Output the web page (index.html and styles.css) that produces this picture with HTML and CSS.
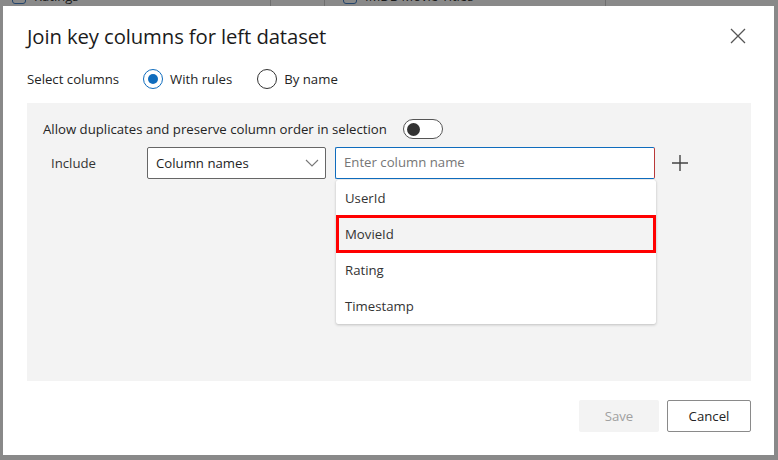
FILE: index.html
```html
<!DOCTYPE html>
<html>
<head>
<meta charset="utf-8">
<link rel="stylesheet" href="styles.css">
</head>
<body>
<div class="backdrop">
  <div class="behind">
    <div class="tab t1"><span class="ticon"></span><span class="ttext">Ratings</span></div>
    <div class="tab t2"></div>
    <div class="tab t3"><span class="ticon"></span><span class="ttext">IMDB Movie Titles</span></div>
    <div class="tab t4"></div>
  </div>
  <div class="dialog">
    <div class="header">
      <h1 class="title">Join key columns for left dataset</h1>
      <svg class="close" width="16" height="16" viewBox="0 0 16 16"><path d="M1 1 L15 15 M15 1 L1 15" stroke="#555" stroke-width="1.3" fill="none"/></svg>
    </div>
    <div class="select-row">
      <span class="label">Select columns</span>
      <span class="radio checked"><span class="dot"></span></span><span class="rlabel">With rules</span>
      <span class="radio"></span><span class="rlabel">By name</span>
    </div>
    <div class="panel">
      <div class="allow-row">
        <span>Allow duplicates and preserve column order in selection</span>
        <span class="toggle"><span class="knob"></span></span>
      </div>
      <div class="include-row">
        <span class="inc-label">Include</span>
        <div class="dropdown">
          <span>Column names</span>
          <svg width="14" height="8" viewBox="0 0 14 8"><path d="M1 1 L7 7 L13 1" stroke="#777" stroke-width="1.1" fill="none"/></svg>
        </div>
        <div class="combo">
          <div class="input">Enter column name</div>
          <div class="menu">
            <div class="item">UserId</div>
            <div class="item sel">MovieId</div>
            <div class="item">Rating</div>
            <div class="item">Timestamp</div>
          </div>
        </div>
        <svg class="plus" width="18" height="18" viewBox="0 0 18 18"><path d="M9 1 V17 M1 9 H17" stroke="#444" stroke-width="1.4" fill="none"/></svg>
      </div>
    </div>
    <div class="footer">
      <button class="btn save">Save</button>
      <button class="btn cancel">Cancel</button>
    </div>
  </div>
</div>
</body>
</html>
```

FILE: styles.css
```css
* { box-sizing: border-box; }
html, body { margin: 0; padding: 0; }
body {
  width: 778px; height: 460px; overflow: hidden;
  background: #898989;
  font-family: "Open Sans", "Noto Sans", sans-serif;
  color: #242424;
}
.backdrop { position: relative; width: 778px; height: 460px; }
.behind {
  position: absolute; left: 0; top: -12px; width: 778px; height: 18px;
  display: flex;
}
.tab { height: 18px; display: flex; align-items: center; gap: 8px; padding-left: 12px; color: #1a1a1a; font-size: 13px; }
.t1 { width: 271px; border-right: 1px solid #6f6f6f; }
.t2 { width: 54px; border-right: 1px solid #6f6f6f; }
.t3 { width: 281px; border-right: 1px solid #6f6f6f; padding-left: 18px; }
.t4 { flex: 1; }
.ticon { width: 14px; height: 14px; border: 1.5px solid #23446b; border-radius: 3px; }
.ttext { position: relative; top: -1px; }

.dialog {
  position: absolute; left: 3px; top: 6px; width: 771px; height: 449px;
  background: #fff;
  padding: 0 23px 0 24px;
  display: flex; flex-direction: column;
}
.header { display: flex; justify-content: space-between; align-items: center; height: 57px; padding-top: 2px; }
.title { margin: 0; font-size: 20.3px; font-weight: 400; color: #1b1b1b; letter-spacing: -0.1px; }
.close { margin-right: 5px; }

.select-row { display: flex; align-items: center; height: 32px; font-size: 13.2px; color: #242424; }
.select-row .label { width: 116px; }
.radio {
  width: 20px; height: 20px; border-radius: 50%; border: 1px solid #333;
  display: inline-flex; align-items: center; justify-content: center;
  margin-right: 7px;
}
.radio.checked { border-color: #0f6cbd; }
.radio .dot { width: 10px; height: 10px; border-radius: 50%; background: #0f6cbd; }
.rlabel { margin-right: 25px; }

.panel {
  margin-top: 8px;
  background: #f3f3f3; height: 278px;
  padding: 14px 16px 0 16px;
}
.allow-row { display: flex; align-items: center; gap: 16px; font-size: 13.2px; height: 24px; }
.toggle {
  width: 40px; height: 20px; border-radius: 10px; border: 1px solid #555; background: #fff;
  display: inline-flex; align-items: center; padding-left: 3px;
}
.knob { width: 13px; height: 13px; border-radius: 50%; background: #333; }

.include-row { display: flex; align-items: flex-start; margin-top: 6px; font-size: 13.2px; }
.inc-label { width: 104px; padding-left: 8px; height: 32px; line-height: 32px; color: #333; }
.dropdown {
  width: 179px; height: 32px; border: 1px solid #666; border-radius: 2px; background: #fff;
  display: flex; align-items: center; justify-content: space-between; padding: 0 6px 0 8px;
}
.combo { margin-left: 9px; width: 320px; position: relative; }
.input {
  height: 32px; border: 1.5px solid #0f6cbd; border-right-color: #b93838; border-radius: 2px; background: #fff;
  padding-left: 8px; line-height: 29px; color: #767676;
}
.menu {
  position: absolute; left: 1px; top: 33px; width: 320px; background: #fff;
  box-shadow: 0 1px 3px rgba(0,0,0,0.2), 0 0 1px rgba(0,0,0,0.15);
  border-radius: 2px;
}
.item { height: 36px; line-height: 36px; padding-left: 9px; color: #333; }
.item.sel { background: #f3f3f3; outline: 3px solid #ff0000; outline-offset: -3px; height: 38px; line-height: 38px; margin: -1px 0; }
.plus { margin-left: 16px; margin-top: 7px; }

.footer { display: flex; justify-content: flex-end; gap: 8px; margin-top: 19px; }
.btn {
  height: 32px; font-family: inherit; font-size: 13.2px; border-radius: 2px; padding: 0;
}
.save { width: 80px; background: #f3f3f3; border: none; color: #a0a0a0; }
.cancel { width: 84px; background: #fff; border: 1px solid #8a8a8a; color: #242424; }
```
